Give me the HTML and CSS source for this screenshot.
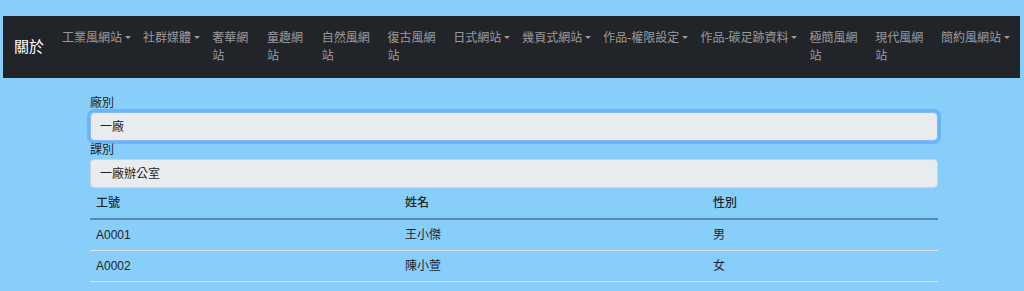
FILE: index.html
```html
<!DOCTYPE html>
<html lang="zh-Hant">
<head>
<meta charset="utf-8">
<title>廠別</title>
<link rel="stylesheet" href="styles.css">
</head>
<body>
<div class="page">
  <nav class="navbar">
    <a class="brand">關於</a>
    <ul class="nav">
      <li class="nav-item"><a class="nav-link dropdown">工業風網站</a></li>
      <li class="nav-item"><a class="nav-link dropdown">社群媒體</a></li>
      <li class="nav-item"><a class="nav-link">奢華網站</a></li>
      <li class="nav-item"><a class="nav-link">童趣網站</a></li>
      <li class="nav-item"><a class="nav-link">自然風網站</a></li>
      <li class="nav-item"><a class="nav-link">復古風網站</a></li>
      <li class="nav-item"><a class="nav-link dropdown">日式網站</a></li>
      <li class="nav-item"><a class="nav-link dropdown">幾頁式網站</a></li>
      <li class="nav-item"><a class="nav-link dropdown">作品-權限設定</a></li>
      <li class="nav-item"><a class="nav-link dropdown">作品-碳足跡資料</a></li>
      <li class="nav-item"><a class="nav-link">極簡風網站</a></li>
      <li class="nav-item"><a class="nav-link">現代風網站</a></li>
      <li class="nav-item"><a class="nav-link dropdown">簡約風網站</a></li>
    </ul>
  </nav>
  <main class="content">
    <label class="form-label">廠別</label>
    <div class="field field-focus">一廠</div>
    <label class="form-label">課別</label>
    <div class="field">一廠辦公室</div>
    <table class="table">
      <thead>
        <tr><th class="col-id">工號</th><th class="col-name">姓名</th><th>性別</th></tr>
      </thead>
      <tbody>
        <tr><td>A0001</td><td>王小傑</td><td>男</td></tr>
        <tr><td>A0002</td><td>陳小萱</td><td>女</td></tr>
      </tbody>
    </table>
  </main>
</div>
</body>
</html>
```

FILE: styles.css
```css
html, body {
  margin: 0;
  background: #87cefa;
}

body {
  font-family: "Liberation Sans", "Noto Sans CJK TC", sans-serif;
  font-size: 12px;
  line-height: 1.5;
  color: #212529;
}

.page {
  padding: 16px 4px 0 3px;
}

.navbar {
  display: flex;
  align-items: center;
  background: #212529;
  padding: 7px 4px 7px 11px;
}

.brand {
  color: #fff;
  font-size: 15px;
  line-height: 22px;
  margin-right: 12px;
  white-space: nowrap;
}

.nav {
  display: flex;
  flex: 1;
  min-width: 0;
  list-style: none;
  margin: 0;
  padding: 0;
}

.nav-link {
  display: block;
  padding: 6px;
  color: rgba(255, 255, 255, 0.55);
}

.dropdown {
  white-space: nowrap;
}

.dropdown::after {
  content: "";
  display: inline-block;
  margin-left: 0.255em;
  vertical-align: 0.255em;
  border-top: 0.3em solid;
  border-right: 0.3em solid transparent;
  border-left: 0.3em solid transparent;
  border-bottom: 0;
}

.content {
  width: 848px;
  margin: 16px 0 0 87px;
}

.form-label {
  display: block;
  line-height: 18px;
}

.field {
  box-sizing: border-box;
  width: 100%;
  padding: 4.5px 9px;
  line-height: 18px;
  border: 1px solid #ced4da;
  border-radius: 4.5px;
  background: #e9ecef;
  color: #212529;
}

.field-focus {
  border-color: #86b7fe;
  box-shadow: 0 0 0 3px rgba(13, 110, 253, 0.25);
}

.table {
  width: 100%;
  border-collapse: collapse;
}

.table th,
.table td {
  padding: 6px;
  text-align: left;
  line-height: 18px;
  border-bottom: 1px solid #dee2e6;
}

.table th {
  font-weight: 500;
  border-bottom: 2px solid #5b88a8;
}

.col-id {
  width: 297px;
}

.col-name {
  width: 296px;
}
```
